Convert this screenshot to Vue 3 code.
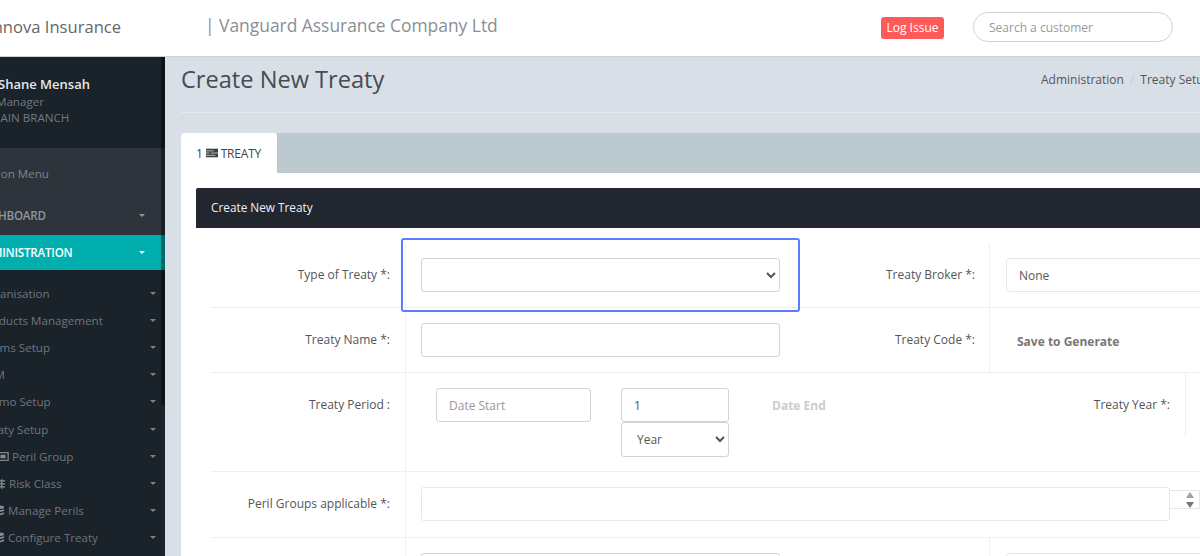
<script setup>
const subItems = [
  { label: 'Organisation', lead: 0 },
  { label: 'Products Management', lead: 0 },
  { label: 'Claims Setup', lead: 0 },
  { label: 'CRM', lead: 0 },
  { label: 'Promo Setup', lead: 0 },
  { label: 'Treaty Setup', lead: 0 },
  { label: 'Peril Group', icon: 'group', lead: 17 },
  { label: 'Risk Class', icon: 'risk', lead: 14 },
  { label: 'Manage Perils', icon: 'db', lead: 13 },
  { label: 'Configure Treaty', icon: 'db', lead: 13 }
]
</script>

<template>
  <div class="viewport">
    <div class="page">
      <header class="topbar">
        <div class="brand">Innova Insurance</div>
        <div class="company">| Vanguard Assurance Company Ltd</div>
        <div class="log-issue">Log Issue</div>
        <input class="search" type="text" placeholder="Search a customer" />
      </header>

      <div class="body">
        <aside class="sidebar">
          <div class="user">
            <div class="user-name">Shane Mensah</div>
            <div class="user-line role">Manager</div>
            <div class="user-line branch">MAIN BRANCH</div>
          </div>
          <div class="nav-head">
            <div class="nav-title">Navigation Menu</div>
            <div class="top-item">
              <span>DASHBOARD</span>
              <i class="caret"></i>
            </div>
          </div>
          <div class="top-item active">
            <span>ADMINISTRATION</span>
            <i class="caret"></i>
          </div>
          <ul class="sub-list">
            <li v-for="item in subItems" :key="item.label" class="sub-item">
              <span class="sub-label">
                <span v-if="item.icon" class="icon-slot" :style="{ marginLeft: item.lead + 'px' }">
                  <svg v-if="item.icon === 'group'" class="sub-icon" viewBox="0 0 14 12">
                    <rect x="1" y="1.5" width="12" height="9" fill="none" stroke="#868c91" stroke-width="1.4" />
                    <rect x="4" y="4" width="6" height="4" fill="#868c91" />
                  </svg>
                  <svg v-else-if="item.icon === 'risk'" class="sub-icon" viewBox="0 0 14 12">
                    <path d="M1 3h12M1 6.5h12M1 10h12M9 1v11" fill="none" stroke="#868c91" stroke-width="1.6" />
                  </svg>
                  <svg v-else class="sub-icon" viewBox="0 0 14 12">
                    <ellipse cx="7" cy="2.2" rx="6" ry="2" fill="#868c91" />
                    <path d="M1 3.6v2c0 1 2.6 2 6 2s6-1 6-2v-2c0 1-2.6 2-6 2s-6-1-6-2zM1 7.4v2.2c0 1 2.6 2 6 2s6-1 6-2V7.4c0 1-2.6 2-6 2s-6-1-6-2z" fill="#868c91" />
                  </svg>
                </span>
                {{ item.label }}
              </span>
              <i class="caret"></i>
            </li>
          </ul>
          <div class="scroll-thumb"></div>
        </aside>

        <main class="main">
          <div class="title-row">
            <h1 class="title">Create New Treaty</h1>
            <div class="crumbs">
              <span>Administration</span>
              <span class="crumb-sep">/</span>
              <span>Treaty Setup</span>
            </div>
          </div>

          <div class="tabs">
            <div class="tab">
              1
              <svg class="tab-icon" viewBox="0 0 14 10">
                <rect width="14" height="10" fill="#3b4045" />
                <path d="M0 2.5h9M0 5h4M6 5h8M0 7.7h11" stroke="#c9ced2" stroke-width="1" />
              </svg>
              TREATY
            </div>
            <div class="tab-fill"></div>
          </div>

          <section class="panel">
            <div class="panel-head">Create New Treaty</div>

            <div class="form">
              <div class="row row-a">
                <label class="label">Type of Treaty *:</label>
                <div class="cell">
                  <div class="focus-wrap">
                    <select class="field wide"><option></option></select>
                    <div class="focus-ring"></div>
                  </div>
                  <label class="label-inner">Treaty Broker *:</label>
                </div>
                <div class="cell-right">
                  <select class="field soft none-select"><option>None</option></select>
                </div>
              </div>

              <div class="row row-b">
                <label class="label">Treaty Name *:</label>
                <div class="cell">
                  <input class="field wide" type="text" />
                  <label class="label-inner">Treaty Code *:</label>
                </div>
                <div class="cell-right">
                  <span class="generate">Save to Generate</span>
                </div>
              </div>

              <div class="row row-c">
                <label class="label">Treaty Period :</label>
                <div class="cell-period">
                  <input class="field date" type="text" placeholder="Date Start" />
                  <div class="term">
                    <input class="field term-field" type="text" value="1" />
                    <select class="field term-field year"><option>Year</option></select>
                  </div>
                  <span class="date-end">Date End</span>
                  <label class="label-year">Treaty Year *:</label>
                </div>
                <div class="year-cell"></div>
              </div>

              <div class="row row-d">
                <label class="label">Peril Groups applicable *:</label>
                <div class="cell-groups">
                  <div class="field soft groups-box"></div>
                  <div class="spinner">
                    <i class="spin-up"></i>
                    <i class="spin-down"></i>
                  </div>
                </div>
              </div>

              <div class="row row-e">
                <div class="label"></div>
                <div class="cell">
                  <input class="field wide" type="text" />
                </div>
                <div class="cell-right">
                  <input class="field soft none-select" type="text" />
                </div>
              </div>
            </div>
          </section>
        </main>
      </div>
    </div>
  </div>
</template>

<style>
html, body { margin: 0; padding: 0; background: #fff; }
</style>

<style scoped>
* { box-sizing: border-box; }
.viewport {
  width: 1200px;
  height: 556px;
  overflow: hidden;
  font-family: "Open Sans", "Noto Sans", sans-serif;
  font-size: 12px;
  color: #555;
}
.page { width: 1400px; margin-left: -60px; }

.topbar {
  height: 57px;
  display: flex;
  align-items: center;
  background: #fff;
  border-bottom: 1px solid #cfd2d6;
}
.brand {
  width: 265px;
  flex: none;
  padding-left: 48px;
  font-size: 16.6px;
  color: #666;
  margin-top: -3px;
}
.company {
  width: 676px;
  flex: none;
  font-size: 17.4px;
  color: #8a8f94;
  margin-top: -7px;
}
.log-issue {
  width: 63px;
  height: 22px;
  line-height: 21px;
  text-align: center;
  background: #ff5a5a;
  color: #fff;
  border-radius: 3px;
}
.search {
  width: 200px;
  height: 30px;
  margin-left: 29px;
  margin-top: -2px;
  padding: 0 15px;
  border: 1px solid #cfd2d6;
  border-radius: 15px;
  font: inherit;
  background: #fff;
  outline: none;
}
.search::placeholder { color: #999; }

.body { display: flex; height: 499px; }

.sidebar {
  position: relative;
  width: 225px;
  flex: none;
  background: #1a222a;
  color: #7d8489;
  font-size: 11.6px;
}
.user { height: 91px; padding: 17px 0 0 58px; }
.user-name { font-size: 13px; font-weight: 600; color: #e6e8ea; line-height: 20px; }
.user-line { line-height: 16px; color: #727a80; }
.role { margin-left: -2px; }
.branch { margin-left: -8px; }
.nav-head { height: 87px; background: #2d343c; }
.nav-title { height: 49px; padding: 18px 0 0 17px; line-height: 16px; color: #7d8489; }
.top-item {
  height: 36px;
  display: flex;
  align-items: center;
  justify-content: space-between;
  padding: 0 20px 0 36px;
  color: #90969b;
  font-weight: 600;
  letter-spacing: -0.2px;
}
.top-item.active { height: 35px; background: #00aeae; color: #fff; }
.caret {
  display: block;
  width: 0;
  height: 0;
  border-left: 3.5px solid transparent;
  border-right: 3.5px solid transparent;
  border-top: 3.5px solid currentColor;
}
.sub-list { list-style: none; margin: 0; padding: 9.5px 0 0; }
.sub-item {
  height: 27.2px;
  display: flex;
  align-items: center;
  justify-content: space-between;
  padding: 0 9px 0 40px;
}
.sub-label { display: flex; align-items: center; gap: 3px; color: #6f767c; }
.icon-slot { display: flex; }
.sub-icon { width: 12px; height: 11px; flex: none; }
.sub-item .caret { color: #7d8489; }
.scroll-thumb {
  position: absolute;
  right: 0;
  top: 0;
  width: 4px;
  height: 348px;
  background: rgba(0, 0, 0, 0.4);
}

.main { flex: 1; min-width: 0; background: #d9dfe7; padding-left: 16px; }
.title-row {
  height: 56px;
  margin-bottom: 20px;
  display: flex;
  align-items: center;
  border-bottom: 1px solid #e6eaef;
}
.title {
  width: 860px;
  margin: -11px 0 0;
  font-size: 23.6px;
  font-weight: 400;
  color: #444c55;
}
.crumbs { display: flex; gap: 6px; margin-top: -11px; color: #555; white-space: nowrap; }
.crumb-sep { color: #c6ccd2; }

.tabs { display: flex; height: 40px; }
.tab {
  width: 96px;
  display: flex;
  align-items: center;
  gap: 3px;
  padding-left: 15px;
  background: #fff;
  border-radius: 4px 4px 0 0;
  color: #444;
  letter-spacing: -0.2px;
}
.tab-icon { width: 12px; height: 10px; }
.tab-fill { flex: 1; background: #bcc9ce; }

.panel { background: #fff; padding: 15px; height: 400px; }
.panel-head {
  height: 40px;
  line-height: 39px;
  padding-left: 15px;
  background: #22272f;
  color: #eef0f2;
  font-weight: 500;
  font-size: 11.8px;
  border-radius: 2px 2px 0 0;
}
.form { padding: 15px 0 0 15px; }
.row {
  display: flex;
  border-bottom: 1px solid #eef0f2;
}
.row-a { height: 65px; }
.row-b { height: 65px; }
.row-c { height: 99px; }
.row-d { height: 66px; }
.row-e { height: 40px; border-bottom: 0; }

.label {
  width: 195px;
  flex: none;
  padding: 24px 15px 0 0;
  line-height: 16px;
  text-align: right;
  border-right: 1px solid #eef0f2;
}
.cell {
  width: 584px;
  flex: none;
  display: flex;
  align-items: flex-start;
  padding: 15px 14px 0 15px;
  border-right: 1px solid #eef0f2;
}
.label-inner {
  flex: 1;
  text-align: right;
  line-height: 16px;
  padding-top: 9px;
}
.cell-right { padding: 15px 0 0 16px; }
.field {
  display: block;
  height: 34px;
  padding: 0 12px;
  border: 1px solid #ced4da;
  border-radius: 3px;
  background: #fff;
  font: inherit;
  color: #555;
  outline: none;
}
select.none-select { padding-left: 8px; }
.field.soft { border-color: #e1e8ee; }
.wide { width: 359px; }
.focus-wrap { position: relative; }
.focus-ring {
  position: absolute;
  left: -20px;
  top: -20px;
  width: 399px;
  height: 74px;
  border: 2px solid #5b7cff;
  border-radius: 3px;
  pointer-events: none;
}
.none-select { width: 300px; }
.generate { display: block; padding: 11px 0 0 11px; font-weight: 700; color: #777; line-height: 16px; }

.cell-period {
  width: 779px;
  flex: none;
  display: flex;
  align-items: flex-start;
  padding: 15px 0 0 30px;
}
.date { width: 155px; }
.date::placeholder { color: #999; }
.term { width: 108px; margin-left: 30px; }
.term-field { width: 108px; }
.year { height: 35px; padding-left: 11px; }
.date-end { margin-left: 43px; padding-top: 10px; line-height: 16px; font-weight: 700; color: #ccc; }
.label-year { flex: 1; padding: 9px 15px 0 0; line-height: 16px; text-align: right; }
.year-cell { width: 1px; height: 64px; background: #eef0f2; }

.cell-groups { display: flex; align-items: flex-start; padding: 15px 0 0 15px; }
.groups-box { width: 749px; height: 34px; }
.spinner {
  position: relative;
  width: 30px;
  height: 19px;
  margin-top: 3px;
  border: 1px solid #e1e8ee;
  border-left: 0;
}
.spin-up, .spin-down {
  position: absolute;
  left: 16px;
  width: 0;
  height: 0;
  border-left: 4.5px solid transparent;
  border-right: 4.5px solid transparent;
}
.spin-up { top: 1px; border-bottom: 6px solid #a3a3a3; }
.spin-down { top: 11px; border-top: 6px solid #777; }
</style>
